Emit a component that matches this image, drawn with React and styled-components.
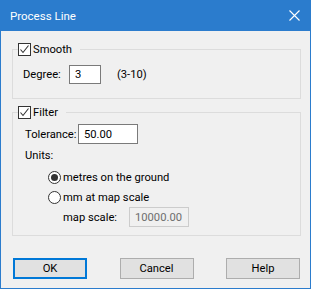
import styled, { createGlobalStyle } from 'styled-components'

const GlobalStyle = createGlobalStyle`
  html, body {
    margin: 0;
    padding: 0;
    background: #f0f0f0;
  }
  * {
    box-sizing: border-box;
  }
`

const Window = styled.div`
  width: 311px;
  height: 289px;
  display: flex;
  flex-direction: column;
  font-family: Roboto, "Liberation Sans", sans-serif;
  font-size: 11.2px;
  color: #000;
`

const TitleBar = styled.div`
  height: 31px;
  flex: none;
  background: #2b7ccd;
  color: #fff;
  display: flex;
  align-items: center;
  justify-content: space-between;
  padding: 0 11px 0 10px;
  font-size: 11.5px;
`

const Body = styled.div`
  flex: 1;
  background: #f0f0f0;
  border: 1px solid #2b7ccd;
  border-top: none;
  padding: 11px 9px 0 11px;
  display: flex;
  flex-direction: column;
`

const Group = styled.fieldset`
  margin: 0 0 ${(p) => p.$gap || 0}px 0;
  padding: 0;
  border: 1px solid #dcdcdc;
  min-width: 0;
`

const Legend = styled.legend`
  margin-left: 5px;
  padding: 0 8px 0 0;
  display: flex;
  align-items: center;
  gap: 2px;
  height: 15px;
`

const Content = styled.div`
  padding: ${(p) => p.$pad};
  display: flex;
  flex-direction: column;
`

const Row = styled.div`
  display: flex;
  align-items: center;
  gap: ${(p) => p.$gap || 0}px;
  padding-left: ${(p) => p.$indent || 0}px;
  margin-top: ${(p) => p.$top || 0}px;
  height: ${(p) => p.$h || 20}px;
`

const Label = styled.span`
  white-space: nowrap;
  flex: none;
  width: ${(p) => (p.$w ? `${p.$w}px` : 'auto')};
  margin-left: ${(p) => p.$ml || 0}px;
`

const Input = styled.div`
  width: ${(p) => p.$w}px;
  height: ${(p) => p.$h || 20}px;
  border: 1px solid ${(p) => (p.$disabled ? '#cccccc' : '#7a7a7a')};
  background: ${(p) => (p.$disabled ? '#f0f0f0' : '#ffffff')};
  color: ${(p) => (p.$disabled ? '#6d6d6d' : '#000')};
  padding-left: ${(p) => p.$pl || 5}px;
  display: flex;
  align-items: center;
  flex: none;
`

const Box = styled.span`
  width: 13px;
  height: 13px;
  border: 1px solid #333;
  background: #fff;
  display: inline-flex;
  align-items: center;
  justify-content: center;
  flex: none;
`

const Radio = styled.span`
  width: 13px;
  height: 13px;
  border: 1px solid #333;
  border-radius: 50%;
  background: #fff;
  display: inline-flex;
  align-items: center;
  justify-content: center;
  flex: none;
  &::after {
    content: '';
    width: 7px;
    height: 7px;
    border-radius: 50%;
    background: ${(p) => (p.$on ? '#333' : 'transparent')};
  }
`

const Buttons = styled.div`
  margin-top: auto;
  margin-bottom: 9px;
  padding: 0 1px;
  display: flex;
  justify-content: space-between;
`

const Button = styled.div`
  width: 74px;
  height: 21px;
  background: #e1e1e1;
  border: ${(p) => (p.$default ? '2px solid #0078d7' : '1px solid #adadad')};
  display: flex;
  align-items: center;
  justify-content: center;
`

const Check = () => (
  <Box>
    <svg width="11" height="11" viewBox="0 0 11 11">
      <path d="M1.5 5.5 L4 8.5 L9.5 1.5" fill="none" stroke="#333" strokeWidth="1.1" />
    </svg>
  </Box>
)

const Close = () => (
  <svg width="11" height="11" viewBox="0 0 11 11">
    <path d="M0.5 0.5 L10.5 10.5 M10.5 0.5 L0.5 10.5" stroke="#fff" strokeWidth="1.1" />
  </svg>
)

export default function App() {
  return (
    <>
      <GlobalStyle />
      <Window>
        <TitleBar>
          <span>Process Line</span>
          <Close />
        </TitleBar>
        <Body>
          <Group $gap={6}>
            <Legend>
              <Check />
              <span>Smooth</span>
            </Legend>
            <Content $pad="8px 0 14px 10px">
              <Row $h={19}>
                <Label $w={46}>Degree:</Label>
                <Input $w={32} $h={19}>3</Input>
                <Label $ml={16}>(3-10)</Label>
              </Row>
            </Content>
          </Group>
          <Group>
            <Legend>
              <Check />
              <span>Filter</span>
            </Legend>
            <Content $pad="4px 0 8px 12px">
              <Row>
                <Label $w={53}>Tolerance:</Label>
                <Input $w={60}>50.00</Input>
              </Row>
              <Row $top={1}>
                <Label>Units:</Label>
              </Row>
              <Row $indent={23} $gap={2} $top={2}>
                <Radio $on />
                <Label>metres on the ground</Label>
              </Row>
              <Row $indent={23} $gap={2}>
                <Radio />
                <Label>mm at map scale</Label>
              </Row>
              <Row $indent={38}>
                <Label $w={66}>map scale:</Label>
                <Input $w={60} $disabled>10000.00</Input>
              </Row>
            </Content>
          </Group>
          <Buttons>
            <Button $default>OK</Button>
            <Button>Cancel</Button>
            <Button>Help</Button>
          </Buttons>
        </Body>
      </Window>
    </>
  )
}
